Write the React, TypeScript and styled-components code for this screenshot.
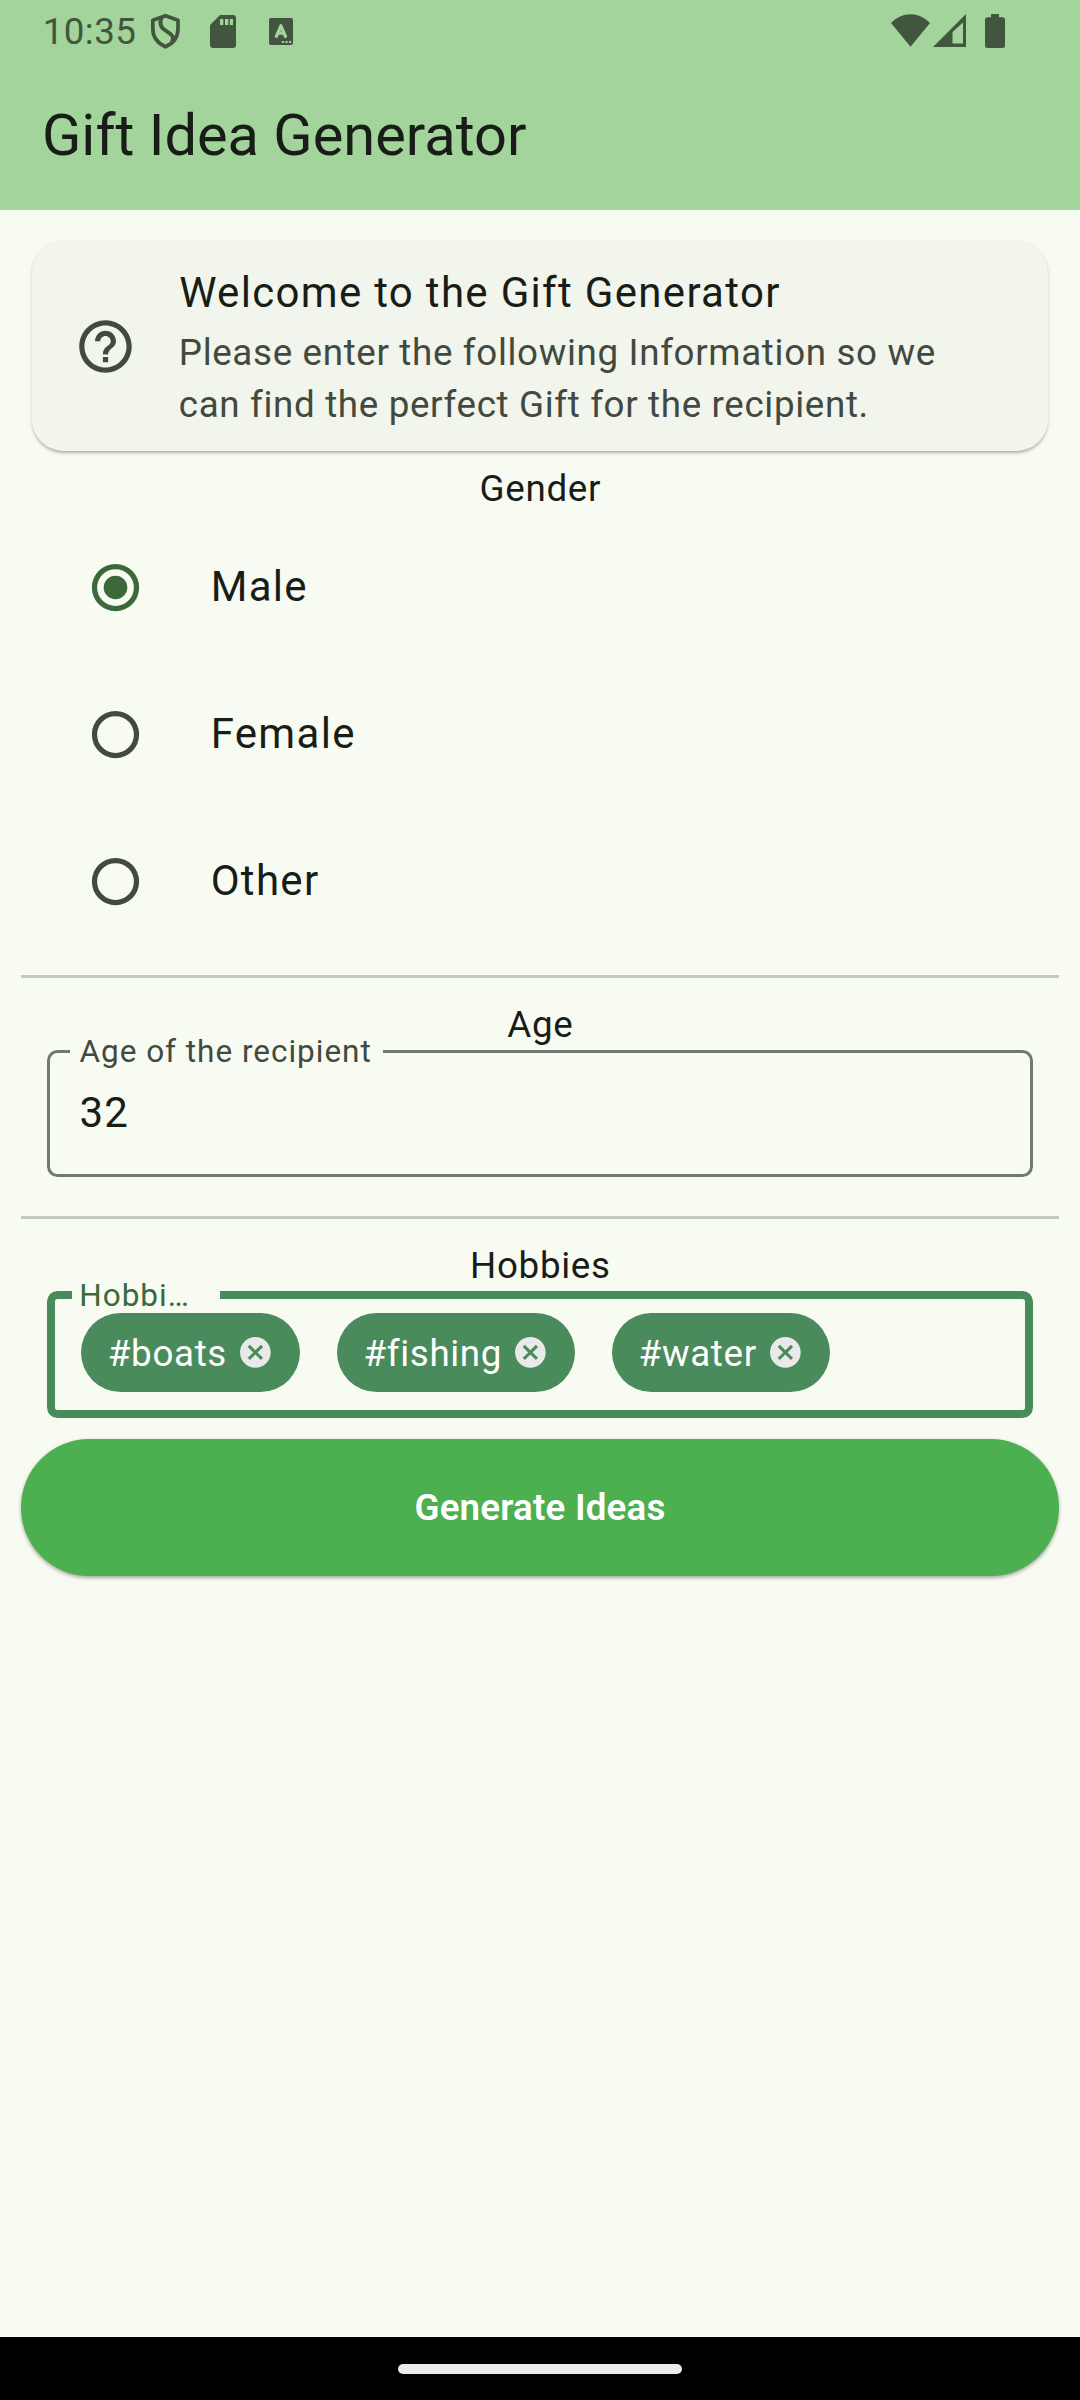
import React, { useState } from "react";
import styled, { createGlobalStyle } from "styled-components";

const color = {
  page: "#f8fbf2",
  bar: "#a3d49b",
  status: "#42553f",
  ink: "#191d17",
  muted: "#424940",
  outline: "#727970",
  divider: "#c2c9bd",
  primary: "#3b6939",
  chip: "#4a8b5c",
  button: "#4caf50",
};

const GlobalStyle = createGlobalStyle`
  *, *::before, *::after { box-sizing: border-box; }
  body {
    margin: 0;
    background: ${color.page};
    color: ${color.ink};
    font-family: Roboto, "Noto Sans", sans-serif;
    font-size: 36.75px;
    line-height: 52.5px;
  }
  svg { display: block; flex: none; }
`;

const Screen = styled.div`
  width: 1080px;
  height: 2400px;
  display: flex;
  flex-direction: column;
  overflow: hidden;
  background: ${color.page};
`;

const Header = styled.header`
  height: 210px;
  flex: none;
  background: ${color.bar};
`;

const StatusBar = styled.div`
  height: 63px;
  padding: 0 75px 0 42.75px;
  display: flex;
  justify-content: space-between;
  color: ${color.status};
`;

const StatusGroup = styled.div`
  display: flex;
  align-items: center;
  height: 63px;
`;

const Clock = styled.span`
  width: 108.25px;
  font-size: 36.75px;
  line-height: 63px;
  letter-spacing: 0.4px;
`;

const AppTitle = styled.h1`
  margin: 0;
  padding: 0 42px;
  font-size: 57.75px;
  line-height: 145px;
  font-weight: 400;
`;

const Content = styled.main`
  flex: 1;
  display: flex;
  flex-direction: column;
  padding: 31.5px 21px 0;
`;

const WelcomeCard = styled.section`
  height: 209.5px;
  margin: 0 10.6px 11px 10.5px;
  padding: 0 42px 0.5px;
  display: flex;
  align-items: center;
  gap: 42.3px;
  border-radius: 31.5px;
  background: #f2f5ec;
  color: ${color.muted};
  box-shadow: 0 2.6px 3px -1px rgba(0, 0, 0, 0.22), 0 1px 4px rgba(0, 0, 0, 0.12);
`;

const WelcomeText = styled.div`
  flex: 1;
  letter-spacing: 0.656px;
`;

const WelcomeTitle = styled.div`
  margin: 0.75px 0 2.75px 0.33px;
  font-size: 42px;
  line-height: 63px;
  letter-spacing: 1.3125px;
  color: ${color.ink};
`;

const WelcomeBody = styled.div`
  width: 790px;
`;

const SectionTitle = styled.div`
  height: 52.5px;
  padding: 1px 0 0 0.66px;
  text-align: center;
  letter-spacing: 0.656px;
`;

const RadioRow = styled.label`
  height: 147px;
  padding-left: 63px;
  display: flex;
  align-items: center;
  gap: 63.66px;
  cursor: pointer;
`;

const RadioInput = styled.input`
  appearance: none;
  position: absolute;
  opacity: 0;
  margin: 0;
`;

const RadioMark = styled.svg`
  margin-bottom: 1px;
`;

const RadioText = styled.span`
  font-size: 42px;
  line-height: 63px;
  letter-spacing: 1.3125px;
  padding-bottom: 3px;
`;

const Rule = styled.hr`
  width: 100%;
  height: 3px;
  margin: 19.5px 0;
  border: 0;
  background: ${color.divider};
`;

const Field = styled.div<{ $strong?: boolean }>`
  position: relative;
  height: 127px;
  margin: 0 26.25px ${(p) => (p.$strong ? 21 : 19.5)}px;
  padding: ${(p) => (p.$strong ? "14px 0 0 26px" : "0 0 3px 29.2px")};
  display: flex;
  align-items: ${(p) => (p.$strong ? "flex-start" : "center")};
  gap: 36.75px;
  border: ${(p) => (p.$strong ? `8px solid ${color.chip}` : `3px solid ${color.outline}`)};
  border-radius: 10.5px;
`;

const FieldLabel = styled.span<{ $strong?: boolean }>`
  position: absolute;
  top: ${(p) => (p.$strong ? -19 : -17)}px;
  left: ${(p) => (p.$strong ? 17 : 20)}px;
  width: ${(p) => (p.$strong ? 147.5 : 313)}px;
  padding-left: ${(p) => (p.$strong ? 7 : 9.2)}px;
  background: ${color.page};
  color: ${(p) => (p.$strong ? color.primary : color.muted)};
  font-size: 31.5px;
  line-height: 32px;
  letter-spacing: 0.984px;
  white-space: nowrap;
`;

const AgeInput = styled.input`
  width: 100%;
  padding: 0;
  border: 0;
  outline: none;
  background: transparent;
  color: ${color.ink};
  font-family: inherit;
  font-size: 42px;
  line-height: 63px;
  letter-spacing: 1.3125px;
`;

const Chip = styled.span`
  height: 78.75px;
  padding: 0 26.25px;
  display: flex;
  align-items: center;
  gap: 10.2px;
  border-radius: 52.5px;
  background: ${color.chip};
  color: #fff;
`;

const ChipText = styled.span`
  padding: 3px 0 0 0.3px;
  letter-spacing: 0.656px;
`;

const GenerateButton = styled.button`
  height: 136.5px;
  padding: 0;
  border: 0;
  border-radius: 68.25px;
  background: ${color.button};
  color: #fff;
  font-family: inherit;
  font-size: 36.75px;
  font-weight: 600;
  letter-spacing: 0.2px;
  box-shadow: 0 2.6px 4px -1px rgba(0, 0, 0, 0.3), 0 1px 4px rgba(0, 0, 0, 0.14);
`;

const NavigationBar = styled.footer`
  height: 63px;
  flex: none;
  display: flex;
  justify-content: center;
  padding-top: 27px;
  background: #000;
`;

const HomeHandle = styled.div`
  width: 284px;
  height: 10px;
  border-radius: 5px;
  background: #ebebeb;
`;

const StatusIcons = () => (
  <svg width="150" height="63" viewBox="151 0 150 63" fill={color.status} overflow="visible">
    <g fill="none" stroke={color.status} strokeWidth="3.7" strokeLinejoin="round">
      <path d="M165.5 15.7 L178 20.2 V28.5 C178 37 173 43.5 165.5 46.8 C158 43.5 152.8 37 152.8 28.5 V20.2 Z" />
      <path d="M162 17 C159.2 22.5 159.6 27 165.7 30.6 C171.8 34.4 174.6 36.5 171.8 42" />
    </g>
    <path
      fillRule="evenodd"
      d="M220 15 H233 a3 3 0 0 1 3 3 V45 a3 3 0 0 1 -3 3 H213 a3 3 0 0 1 -3 -3 V25 Z M220 19 V25 H223.3 V19 Z M225 19 V25 H228.3 V19 Z M229.8 19 V25 H233 V19 Z"
    />
    <rect x="269" y="18" width="24" height="27" rx="2" />
    <path d="M276.4 36.4 L280.9 25.8 L285.4 36.4 M278 33.2 H284" fill="none" stroke={color.bar} strokeWidth="3.3" strokeLinecap="round" strokeLinejoin="round" />
    <path d="M281.8 41 h2.2 v2 h-2.2z M285.4 41 h2.2 v2 h-2.2z M289 41 h2.2 v2 h-2.2z" fill={color.bar} />
  </svg>
);

const SignalIcons = () => (
  <svg width="114" height="63" viewBox="891 0 114 63" fill={color.status}>
    <path d="M910.5 46.7 L891 23 C902 11.2 919 11.2 930 23 Z" />
    <path fillRule="evenodd" d="M966 14 V47 H933 Z M963 22.5 L952.5 32 V43.5 H963 Z" />
    <path d="M991 14 H999 V17.3 H1002.5 a2.5 2.5 0 0 1 2.5 2.5 V45.5 a2.5 2.5 0 0 1 -2.5 2.5 H987.5 a2.5 2.5 0 0 1 -2.5 -2.5 V19.8 a2.5 2.5 0 0 1 2.5 -2.5 H991 Z" />
  </svg>
);

const HelpIcon = () => (
  <svg width="63" height="63" viewBox="0 0 24 24" fill="currentColor">
    <path d="M11 18h2v-2h-2v2zm1-16C6.48 2 2 6.48 2 12s4.48 10 10 10 10-4.48 10-10S17.52 2 12 2zm0 18c-4.41 0-8-3.59-8-8s3.59-8 8-8 8 3.59 8 8-3.59 8-8 8zm0-14c-2.21 0-4 1.79-4 4h2c0-1.1.9-2 2-2s2 .9 2 2c0 2-3 1.75-3 5h2c0-2.25 3-2.5 3-5 0-2.21-1.79-4-4-4z" />
  </svg>
);

const RadioIcon = ({ checked }: { checked: boolean }) => (
  <RadioMark width="63" height="63" viewBox="0 0 24 24">
    <circle cx="12" cy="12" r="8" fill="none" stroke={checked ? color.primary : color.muted} strokeWidth="2" />
    {checked && <circle cx="12" cy="12" r="4.5" fill={color.primary} />}
  </RadioMark>
);

const CancelIcon = () => (
  <svg width="36.75" height="36.75" viewBox="0 0 24 24" fill="#e9e9e9">
    <path d="M12 2C6.47 2 2 6.47 2 12s4.47 10 10 10 10-4.47 10-10S17.53 2 12 2zm5 13.59L15.59 17 12 13.41 8.41 17 7 15.59 10.59 12 7 8.41 8.41 7 12 10.59 15.59 7 17 8.41 13.41 12 17 15.59z" />
  </svg>
);

const genders = ["Male", "Female", "Other"];

export default function App() {
  const [gender, setGender] = useState("Male");
  const [age, setAge] = useState("32");
  const [hobbies, setHobbies] = useState(["boats", "fishing", "water"]);

  return (
    <Screen>
      <GlobalStyle />
      <Header>
        <StatusBar>
          <StatusGroup>
            <Clock>10:35</Clock>
            <StatusIcons />
          </StatusGroup>
          <StatusGroup>
            <SignalIcons />
          </StatusGroup>
        </StatusBar>
        <AppTitle>Gift Idea Generator</AppTitle>
      </Header>
      <Content>
        <WelcomeCard>
          <HelpIcon />
          <WelcomeText>
            <WelcomeTitle>Welcome to the Gift Generator</WelcomeTitle>
            <WelcomeBody>
              Please enter the following Information so we can find the perfect Gift for the recipient.
            </WelcomeBody>
          </WelcomeText>
        </WelcomeCard>
        <SectionTitle>Gender</SectionTitle>
        {genders.map((g) => (
          <RadioRow key={g}>
            <RadioInput type="radio" name="gender" checked={g === gender} onChange={() => setGender(g)} />
            <RadioIcon checked={g === gender} />
            <RadioText>{g}</RadioText>
          </RadioRow>
        ))}
        <Rule />
        <SectionTitle>Age</SectionTitle>
        <Field>
          <FieldLabel>Age of the recipient</FieldLabel>
          <AgeInput value={age} onChange={(e) => setAge(e.target.value)} />
        </Field>
        <Rule />
        <SectionTitle>Hobbies</SectionTitle>
        <Field $strong>
          <FieldLabel $strong>Hobbi…</FieldLabel>
          {hobbies.map((h) => (
            <Chip key={h} onClick={() => setHobbies(hobbies.filter((x) => x !== h))}>
              <ChipText>#{h}</ChipText>
              <CancelIcon />
            </Chip>
          ))}
        </Field>
        <GenerateButton>Generate Ideas</GenerateButton>
      </Content>
      <NavigationBar>
        <HomeHandle />
      </NavigationBar>
    </Screen>
  );
}
